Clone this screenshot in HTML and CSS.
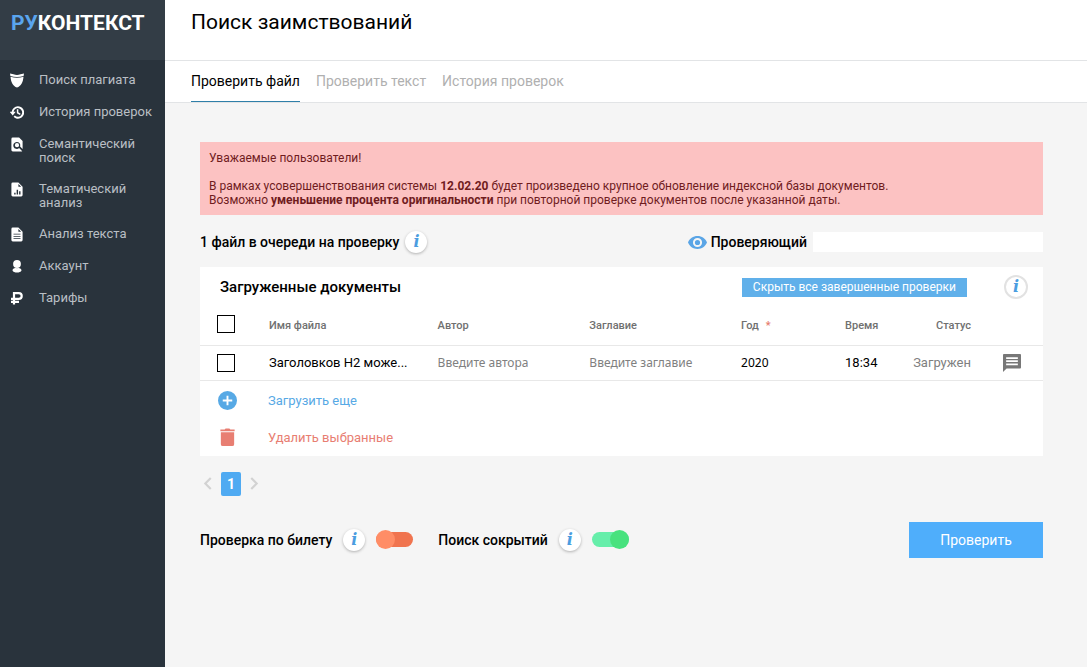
FILE: index.html
```html
<!DOCTYPE html>
<html lang="ru">
<head>
    <meta charset="UTF-8">
    <meta name="viewport" content="width=device-width, initial-scale=1.0">
    <title>Руконтекст - Поиск заимствований</title>
    <link rel="stylesheet" href="styles.css">
</head>
<body>
    <aside class="sidebar">
        <a class="logo" href="#"><span>РУ</span>КОНТЕКСТ</a>
        <nav class="menu">
            <a href="#">
                <svg viewBox="0 0 14 14"><path d="M0 0l3.500.8Q7 2.200 10.500.8L14 0l-.4 2.400Q7 4.700.4 2.400zM.5 3.200Q7 5.500 13.500 3.200C13 9 11 12.500 7 14 3 12.500 1 9 .5 3.200z"/></svg>
                <span>Поиск плагиата</span>
            </a>
            <a href="#">
                <svg viewBox="1 2.500 21.500 19"><path d="M13 2.500A9.500 9.500 0 0 0 3.600 11H.5l4.700 5.500L9.800 11H6.500a6.600 6.600 0 1 1 2 5.700l-2 2A9.500 9.500 0 1 0 13 2.500zM11.500 7v6l4.700 2.800 1.200-1.900-3.600-2.100V7z"/></svg>
                <span>История проверок</span>
            </a>
            <a href="#">
                <svg viewBox="2 2 20 20"><path fill-rule="evenodd" d="M6 2h9l5 5v11.500l-3.600-3.600A5 5 0 1 0 15 17l4.500 4.500-1 .5H6a2 2 0 0 1-2-2V4a2 2 0 0 1 2-2zm6 8a3 3 0 1 1 0 6 3 3 0 0 1 0-6z"/></svg>
                <span>Семантический поиск</span>
            </a>
            <a href="#">
                <svg viewBox="2 2 20 20"><path fill-rule="evenodd" d="M6 2h8l6 6v12a2 2 0 0 1-2 2H6a2 2 0 0 1-2-2V4a2 2 0 0 1 2-2zm8 2v4h4zM8 16.500V19h2v-2.500zm3.500-4V19h2v-6.500zm3.500 2V19h2v-4.500z"/></svg>
                <span>Тематический анализ</span>
            </a>
            <a href="#">
                <svg viewBox="2 2 20 20"><path fill-rule="evenodd" d="M6 2h8l6 6v12a2 2 0 0 1-2 2H6a2 2 0 0 1-2-2V4a2 2 0 0 1 2-2zm8 2v4h4zM7 11v1h10v-1zm0 3.200v1h10v-1zm0 3.200v1h10v-1z"/></svg>
                <span>Анализ текста</span>
            </a>
            <a href="#">
                <svg viewBox="0 0 14 14"><circle cx="7" cy="4.500" r="3.900"/><path d="M2.500 11C2.500 9 4.500 8 7 8.700c2.500-.7 4.500.3 4.500 2.300C11 12.500 9 13 7 13s-4-.5-4.500-2z"/></svg>
                <span>Аккаунт</span>
            </a>
            <a href="#">
                <svg viewBox="0 0 14 14"><path fill="none" stroke="#fff" stroke-width="2.200" d="M4 13V1.600h4.800a2.900 2.900 0 0 1 0 5.800H1M1 10.400h8"/></svg>
                <span>Тарифы</span>
            </a>
        </nav>
    </aside>

    <main class="page">
        <header class="page-header">
            <h1>Поиск заимствований</h1>
        </header>
        <nav class="tabs">
            <a class="active" href="#">Проверить файл</a>
            <a href="#">Проверить текст</a>
            <a href="#">История проверок</a>
        </nav>

        <div class="content">
            <div class="notice">
                <p>Уважаемые пользователи!</p>
                <p>В рамках усовершенствования системы <b>12.02.20</b> будет произведено крупное обновление индексной базы документов.<br>
                Возможно <b>уменьшение процента оригинальности</b> при повторной проверке документов после указанной даты.</p>
            </div>

            <div class="queue">
                <span class="strong">1 файл в очереди на проверку</span>
                <button class="info" type="button">i</button>
                <label class="reviewer strong" for="reviewer">
                    <svg viewBox="1 4 22 15"><path fill-rule="evenodd" d="M12 4C7 4 2.700 7.100 1 11.500 2.700 15.900 7 19 12 19s9.300-3.100 11-7.500C21.300 7.100 17 4 12 4zm0 2.200a5.300 5.300 0 1 1 0 10.600 5.300 5.300 0 0 1 0-10.600zm0 2.300a3 3 0 1 0 0 6 3 3 0 0 0 0-6z"/></svg>
                    Проверяющий
                </label>
                <input class="reviewer-input" id="reviewer" type="text">
            </div>

            <section class="card">
                <div class="card-head">
                    <h2>Загруженные документы</h2>
                    <button class="hide-done" type="button">Скрыть все завершенные проверки</button>
                    <button class="info flat" type="button">i</button>
                </div>
                <table class="docs">
                    <thead>
                        <tr>
                            <th class="col-check"><input class="check" type="checkbox" aria-label="Выбрать все"></th>
                            <th class="col-name">Имя файла</th>
                            <th class="col-author">Автор</th>
                            <th class="col-title">Заглавие</th>
                            <th class="col-year">Год <span class="required">*</span></th>
                            <th class="col-time">Время</th>
                            <th class="col-status">Статус</th>
                            <th class="col-comment"></th>
                        </tr>
                    </thead>
                    <tbody>
                        <tr>
                            <td class="col-check"><input class="check" type="checkbox" aria-label="Выбрать файл"></td>
                            <td class="file-name">Заголовков Н2 може...</td>
                            <td><input class="field" type="text" placeholder="Введите автора" aria-label="Автор"></td>
                            <td><input class="field" type="text" placeholder="Введите заглавие" aria-label="Заглавие"></td>
                            <td><input class="field" type="text" value="2020" aria-label="Год"></td>
                            <td>18:34</td>
                            <td class="col-status status">Загружен</td>
                            <td class="col-comment">
                                <button class="comment" type="button" aria-label="Комментарий">
                                    <svg viewBox="2 2 20 20"><path fill-rule="evenodd" d="M3 2h18a1 1 0 0 1 1 1v14a1 1 0 0 1-1 1H6l-4 4V3a1 1 0 0 1 1-1zm2.500 3.500v2h13v-2zm0 3.500v2h13V9zm0 3.500v2h13v-2z"/></svg>
                                </button>
                            </td>
                        </tr>
                    </tbody>
                </table>
                <div class="actions">
                    <button class="action add" type="button">
                        <svg viewBox="2 2 20 20"><path fill-rule="evenodd" d="M12 2a10 10 0 1 0 0 20 10 10 0 0 0 0-20zm-1 5h2v4h4v2h-4v4h-2v-4H7v-2h4z"/></svg>
                        Загрузить еще
                    </button>
                    <button class="action remove" type="button">
                        <svg viewBox="2 2 20 20"><path d="M5 6.500h14V19a2 2 0 0 1-2 2H7a2 2 0 0 1-2-2zM4.500 3.500H9l1-1h4l1 1h4.500v2h-15z"/></svg>
                        Удалить выбранные
                    </button>
                </div>
            </section>

            <nav class="pager">
                <a href="#" aria-label="Назад"><svg viewBox="0 0 8 12"><path d="M7 1L2 6l5 5"/></svg></a>
                <a class="current" href="#">1</a>
                <a href="#" aria-label="Вперед"><svg viewBox="0 0 8 12"><path d="M1 1l5 5-5 5"/></svg></a>
            </nav>

            <div class="options">
                <div class="option">
                    <label class="strong" for="ticket">Проверка по билету</label>
                    <button class="info" type="button">i</button>
                    <input class="toggle" id="ticket" type="checkbox">
                </div>
                <div class="option">
                    <label class="strong" for="hidden-text">Поиск сокрытий</label>
                    <button class="info" type="button">i</button>
                    <input class="toggle" id="hidden-text" type="checkbox" checked>
                </div>
                <button class="submit" type="button">Проверить</button>
            </div>
        </div>
    </main>
</body>
</html>
```
FILE: styles.css
```css
*{
    box-sizing: border-box;
}
body{
    margin: 0;
    min-height: 100vh;
    display: flex;
    font-family: Roboto, "Liberation Sans", sans-serif;
    font-size: 13px;
    color: #000;
    background: #f5f5f5;
}
h1,h2,p{
    margin: 0;
}
a{
    text-decoration: none;
}
button,input{
    margin: 0;
    padding: 0;
    border: none;
    font-family: inherit;
}
button{
    cursor: pointer;
}
svg{
    display: block;
    fill: currentColor;
}
.strong{
    font-size: 14px;
    line-height: 20px;
    font-weight: 500;
}

/* sidebar */
.sidebar{
    flex: 0 0 165px;
    background: #29333c;
}
.logo{
    display: block;
    height: 60px;
    padding: 11px;
    background: #333d46;
    color: #fff;
    font-size: 21px;
    line-height: 24px;
    font-weight: bold;
}
.logo span{
    color: #5aa5ee;
}
.menu{
    display: flex;
    flex-direction: column;
    gap: 17px;
    padding: 13px 8px 0 10px;
}
.menu a{
    display: flex;
    gap: 15px;
    color: #b9bfc4;
    line-height: 14px;
}
.menu svg{
    flex: 0 0 14px;
    height: 15px;
    color: #fff;
}
.menu span{
    flex: 1;
}

/* header and tabs */
.page{
    flex: 1;
    min-width: 0;
}
.page-header{
    height: 61px;
    padding: 10px 26px;
    background: #fff;
    border-bottom: 1px solid #e2e4e6;
}
.page-header h1{
    font-size: 21px;
    line-height: 24px;
    font-weight: normal;
}
.tabs{
    display: flex;
    gap: 16px;
    padding: 0 26px;
    background: #fff;
    border-bottom: 1px solid #e2e4e6;
}
.tabs a{
    color: #b0b0b0;
    font-size: 14px;
    line-height: 40px;
    border-bottom: 1px solid transparent;
}
.tabs .active{
    color: #000;
    border-color: #2f7fa8;
}

.content{
    padding: 39px 44px 40px 35px;
}
.notice{
    padding: 9px 9px 8px;
    background: #fcc2c2;
    color: #701c1e;
    font-size: 12px;
    line-height: 14px;
}
.notice p + p{
    margin-top: 14px;
}
.queue{
    display: flex;
    align-items: center;
    gap: 6px;
    margin: 16px 0 14px;
}
.info{
    flex: none;
    width: 22px;
    height: 22px;
    border-radius: 50%;
    background: #fff;
    box-shadow: 0 1px 3px #b0b0b0;
    color: #4b9de0;
    font: italic bold 16px/22px "DejaVu Serif", serif;
}
.info.flat{
    width: 24px;
    height: 24px;
    line-height: 20px;
    border: 2px solid #e2e2e2;
    box-shadow: none;
}
.reviewer{
    display: flex;
    align-items: center;
    gap: 4px;
    margin-left: auto;
}
.reviewer svg{
    width: 19px;
    height: 13px;
    color: #5aa5e6;
}
.reviewer-input{
    width: 230px;
    height: 20px;
    background: #fff;
}

/* documents */
.card{
    background: #fff;
}
.card-head{
    display: flex;
    align-items: center;
    padding: 8px 15px 0 20px;
}
.card-head h2{
    font-size: 15px;
    line-height: 20px;
    font-weight: 500;
}
.hide-done{
    margin: 0 37px 0 auto;
    padding: 0 11px;
    background: #60b0ea;
    color: #fff;
    font-size: 12px;
    line-height: 19px;
}
.docs{
    width: 100%;
    table-layout: fixed;
    border-collapse: collapse;
}
.docs th,.docs td{
    padding: 0;
    text-align: left;
    border-bottom: 1px solid #e8e8e8;
}
.docs th{
    height: 46px;
    padding-top: 8px;
    font-size: 11px;
    font-weight: 500;
    color: #707070;
}
.docs td{
    height: 35px;
}
.docs .col-check{
    width: 69px;
    padding-left: 17px;
}
.docs th.col-check{
    padding-top: 4px;
}
.docs .col-name{
    width: 20%;
}
.docs .col-author,.docs .col-title{
    width: 18%;
}
.docs .col-year{
    width: 104px;
}
.docs .col-time{
    width: 60px;
}
.docs .col-status{
    text-align: right;
}
.docs .col-comment{
    width: 72px;
    padding-left: 32px;
}
.required{
    margin-left: 4px;
    color: #e57b6d;
}
.check{
    display: block;
    appearance: none;
    width: 18px;
    height: 18px;
    border: 1px solid #000;
    background: #fff;
}
.field{
    display: block;
    width: 90%;
    font-family: "Noto Sans", sans-serif;
    font-size: 12px;
    background: none;
}
.field::placeholder{
    color: #808080;
}
.status{
    color: #808080;
}
.comment{
    display: block;
    background: none;
    color: #777;
}
.comment svg{
    width: 18px;
    height: 18px;
}
.actions{
    display: flex;
    flex-direction: column;
    align-items: flex-start;
    gap: 17px;
    padding: 10px 18px 8px;
}
.action{
    display: flex;
    align-items: center;
    gap: 31px;
    background: none;
    font-size: 13px;
    line-height: 20px;
}
.action svg{
    width: 19px;
    height: 19px;
}
.add{
    color: #57a9e5;
}
.remove{
    color: #e87e72;
}

.pager{
    display: flex;
    align-items: center;
    gap: 9px;
    margin: 16px 3px 26px;
}
.pager svg{
    width: 9px;
    height: 13px;
    fill: none;
    stroke: #d2d2d2;
    stroke-width: 2;
}
.pager .current{
    width: 20px;
    border-radius: 2px;
    background: #4faaf2;
    color: #fff;
    font-size: 14px;
    line-height: 24px;
    font-weight: bold;
    text-align: center;
}

/* bottom line */
.options{
    display: flex;
    align-items: center;
    gap: 25px;
}
.option{
    display: flex;
    align-items: center;
    gap: 11px;
}
.toggle{
    appearance: none;
    display: flex;
    align-items: center;
    width: 37px;
    height: 15px;
    border-radius: 8px;
    background: #f0744f;
}
.toggle::before{
    content: "";
    width: 19px;
    height: 19px;
    flex: none;
    border-radius: 50%;
    background: #ff8d66;
}
.toggle:checked{
    justify-content: flex-end;
    background: #66eeaa;
}
.toggle:checked::before{
    background: #48e27e;
}
.submit{
    margin-left: auto;
    width: 134px;
    background: #4faefb;
    color: #fff;
    font-size: 14px;
    line-height: 36px;
}
```
